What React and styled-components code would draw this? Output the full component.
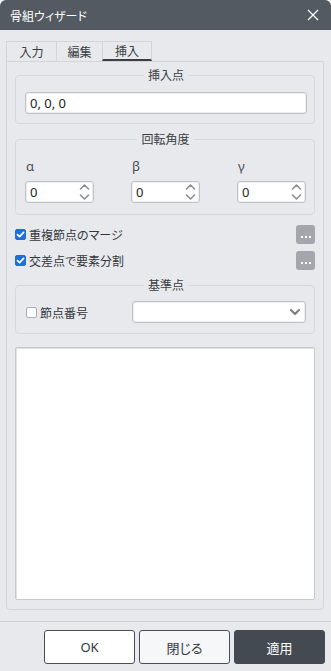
import React from 'react'
import styled, { createGlobalStyle } from 'styled-components'

const GlobalStyle = createGlobalStyle`
  html, body {
    margin: 0;
    padding: 0;
    background: #ffffff;
  }
  * { box-sizing: border-box; }
`;

const Window = styled.div`
  width: 331px;
  height: 671px;
  display: flex;
  flex-direction: column;
  background: #e8e9ec;
  border-radius: 6px 6px 0 0;
  overflow: hidden;
  font-family: "Noto Sans", "Noto Sans CJK JP", sans-serif;
  font-feature-settings: "palt";
  color: #33373c;
`;

const TitleBar = styled.div`
  height: 30px;
  flex: none;
  display: flex;
  align-items: center;
  justify-content: space-between;
  padding: 0 12px 0 10px;
  background: #535a62;
  color: #ffffff;
  font-size: 12px;
  font-family: "Noto Sans CJK JP", sans-serif;
`;

const CloseButton = styled.div`
  width: 12px;
  height: 12px;
  display: flex;
`;

const Body = styled.div`
  flex: 1;
  display: flex;
  flex-direction: column;
  padding: 11px 7px 11px 6px;
`;

const TabRow = styled.div`
  display: flex;
  height: 20px;
  flex: none;
`;

const Tab = styled.div`
  width: ${({ w }) => w}px;
  height: 20px;
  display: flex;
  align-items: center;
  justify-content: center;
  font-size: 12px;
  font-family: "Noto Sans CJK JP", sans-serif;
  color: #3a3e44;
  border: 1px solid #d3d5d9;
  border-bottom: ${({ active }) => (active ? '2px solid #3a3f45' : 'none')};
  margin-left: ${({ first }) => (first ? 0 : -1)}px;
`;

const Panel = styled.div`
  flex: 1;
  display: flex;
  flex-direction: column;
  border: 1px solid #d3d5d9;
  border-radius: 0 0 4px 4px;
  padding: 7px 8px 9px 8px;
`;

const Group = styled.fieldset`
  margin: 0 0 ${({ mb }) => mb}px 0;
  padding: ${({ pad }) => pad};
  border: 1px solid #d6d8dc;
  border-radius: 4px;
  min-width: 0;
`;

const Legend = styled.legend`
  margin: 0 auto;
  padding: 0 4px;
  font-size: 12px;
  line-height: 12px;
  font-family: "Noto Sans CJK JP", sans-serif;
  color: #3a3e44;
`;

const TextInput = styled.div`
  height: 22px;
  display: flex;
  align-items: center;
  padding: 0 4px 1px;
  background: #ffffff;
  border: 1px solid #bfc2c7;
  border-radius: 3px;
  box-shadow: inset 0 0 0 1px #eceef0;
  font-size: 13px;
  color: #1f2226;
`;

const AngleRow = styled.div`
  display: flex;
  justify-content: space-between;
`;

const AngleCol = styled.div`
  display: flex;
  flex-direction: column;
  width: 69px;
`;

const AngleLabel = styled.div`
  height: 16px;
  line-height: 16px;
  margin-bottom: 7px;
  padding-left: 1px;
  font-size: 13px;
  color: #4a4f55;
`;

const Spinner = styled(TextInput)`
  justify-content: space-between;
  padding-right: 3px;
`;

const CheckRow = styled.div`
  height: 20px;
  display: flex;
  align-items: center;
  justify-content: space-between;
  margin-bottom: ${({ mb }) => mb}px;
`;

const CheckLabel = styled.label`
  display: flex;
  align-items: center;
  gap: 3px;
  font-size: 12px;
  font-family: "Noto Sans CJK JP", sans-serif;
  color: #33373c;
`;

const Box = styled.span`
  width: 11px;
  height: 11px;
  flex: none;
  border-radius: 2px;
  display: flex;
  align-items: center;
  justify-content: center;
  background: ${({ checked }) => (checked ? '#1f6fd6' : '#ffffff')};
  border: 1px solid ${({ checked }) => (checked ? '#1f6fd6' : '#a9adb3')};
`;

const DotsButton = styled.div`
  width: 19px;
  height: 19px;
  border-radius: 3px;
  background: #a3a7ad;
  display: flex;
  align-items: flex-end;
  justify-content: center;
  gap: 2px;
  padding-bottom: 6px;
`;

const Dot = styled.span`
  width: 2px;
  height: 2px;
  background: #ffffff;
`;

const BaseRow = styled.div`
  display: flex;
  align-items: center;
  justify-content: space-between;
`;

const Select = styled(TextInput)`
  width: 174px;
  justify-content: flex-end;
  padding-right: 4px;
`;

const ListBox = styled.div`
  flex: 1;
  background: #ffffff;
  border: 1px solid #c6c8cc;
  border-radius: 2px;
  box-shadow: inset 1px 1px 0 #dfe1e4;
  margin-top: 13px;
`;

const Footer = styled.div`
  height: 50px;
  flex: none;
  display: flex;
  justify-content: flex-end;
  align-items: flex-start;
  gap: 4px;
  padding: 8px 6px 0 0;
  border-top: 1px solid #cdd0d4;
`;

const Button = styled.div`
  width: 91px;
  height: 34px;
  display: flex;
  align-items: center;
  justify-content: center;
  border-radius: 3px;
  font-size: 13px;
  font-family: "Noto Sans", "Noto Sans CJK JP", sans-serif;
  background: ${({ variant }) =>
    variant === 'primary' ? '#434a52' : variant === 'soft' ? '#f6f7f9' : '#ffffff'};
  color: ${({ variant }) => (variant === 'primary' ? '#ffffff' : '#33373c')};
  border: 1px solid ${({ variant }) => (variant === 'primary' ? '#434a52' : '#4a4e54')};
`;

const Check = () => (
  <svg width="9" height="9" viewBox="0 0 9 9">
    <path d="M1.5 4.6 L3.6 6.6 L7.6 2.4" fill="none" stroke="#fff" strokeWidth="1.7" strokeLinecap="round" strokeLinejoin="round" />
  </svg>
);

const SpinArrows = () => (
  <svg width="11" height="18" viewBox="0 0 11 18">
    <path d="M1.5 6 L5.5 2 L9.5 6" fill="none" stroke="#8a8e94" strokeWidth="1.6" strokeLinecap="round" strokeLinejoin="round" />
    <path d="M1.5 12 L5.5 16 L9.5 12" fill="none" stroke="#8a8e94" strokeWidth="1.6" strokeLinecap="round" strokeLinejoin="round" />
  </svg>
);

const CheckBox = ({ checked, children }) => (
  <CheckLabel>
    <Box checked={checked}>{checked && <Check />}</Box>
    {children}
  </CheckLabel>
);

const MoreButton = () => (
  <DotsButton>
    <Dot />
    <Dot />
    <Dot />
  </DotsButton>
);

const App = () => {
  const angles = ['α', 'β', 'γ'];
  return (
    <>
      <GlobalStyle />
      <Window>
        <TitleBar>
          <span>骨組ウィザード</span>
          <CloseButton>
            <svg width="12" height="12" viewBox="0 0 12 12">
              <path d="M1 1 L11 11 M11 1 L1 11" stroke="#fff" strokeWidth="1.3" />
            </svg>
          </CloseButton>
        </TitleBar>
        <Body>
          <TabRow>
            <Tab w={51} first>入力</Tab>
            <Tab w={47}>編集</Tab>
            <Tab w={50} active>挿入</Tab>
          </TabRow>
          <Panel>
            <Group mb={9} pad="11px 7px 9px 9px">
              <Legend>挿入点</Legend>
              <TextInput>0, 0, 0</TextInput>
            </Group>
            <Group mb={9} pad="13px 8px 11px 9px">
              <Legend>回転角度</Legend>
              <AngleRow>
                {angles.map((a) => (
                  <AngleCol key={a}>
                    <AngleLabel>{a}</AngleLabel>
                    <Spinner>
                      <span>0</span>
                      <SpinArrows />
                    </Spinner>
                  </AngleCol>
                ))}
              </AngleRow>
            </Group>
            <CheckRow mb={6}>
              <CheckBox checked>重複節点のマージ</CheckBox>
              <MoreButton />
            </CheckRow>
            <CheckRow mb={9}>
              <CheckBox checked>交差点で要素分割</CheckBox>
              <MoreButton />
            </CheckRow>
            <Group mb={0} pad="10px 8px 10px 10px">
              <Legend>基準点</Legend>
              <BaseRow>
                <CheckBox>節点番号</CheckBox>
                <Select>
                  <svg width="12" height="8" viewBox="0 0 12 8">
                    <path d="M2 2 L6 6 L10 2" fill="none" stroke="#7d8187" strokeWidth="2.2" strokeLinecap="round" strokeLinejoin="round" />
                  </svg>
                </Select>
              </BaseRow>
            </Group>
            <ListBox />
          </Panel>
        </Body>
        <Footer>
          <Button>OK</Button>
          <Button variant="soft">閉じる</Button>
          <Button variant="primary">適用</Button>
        </Footer>
      </Window>
    </>
  )
}

export default App
